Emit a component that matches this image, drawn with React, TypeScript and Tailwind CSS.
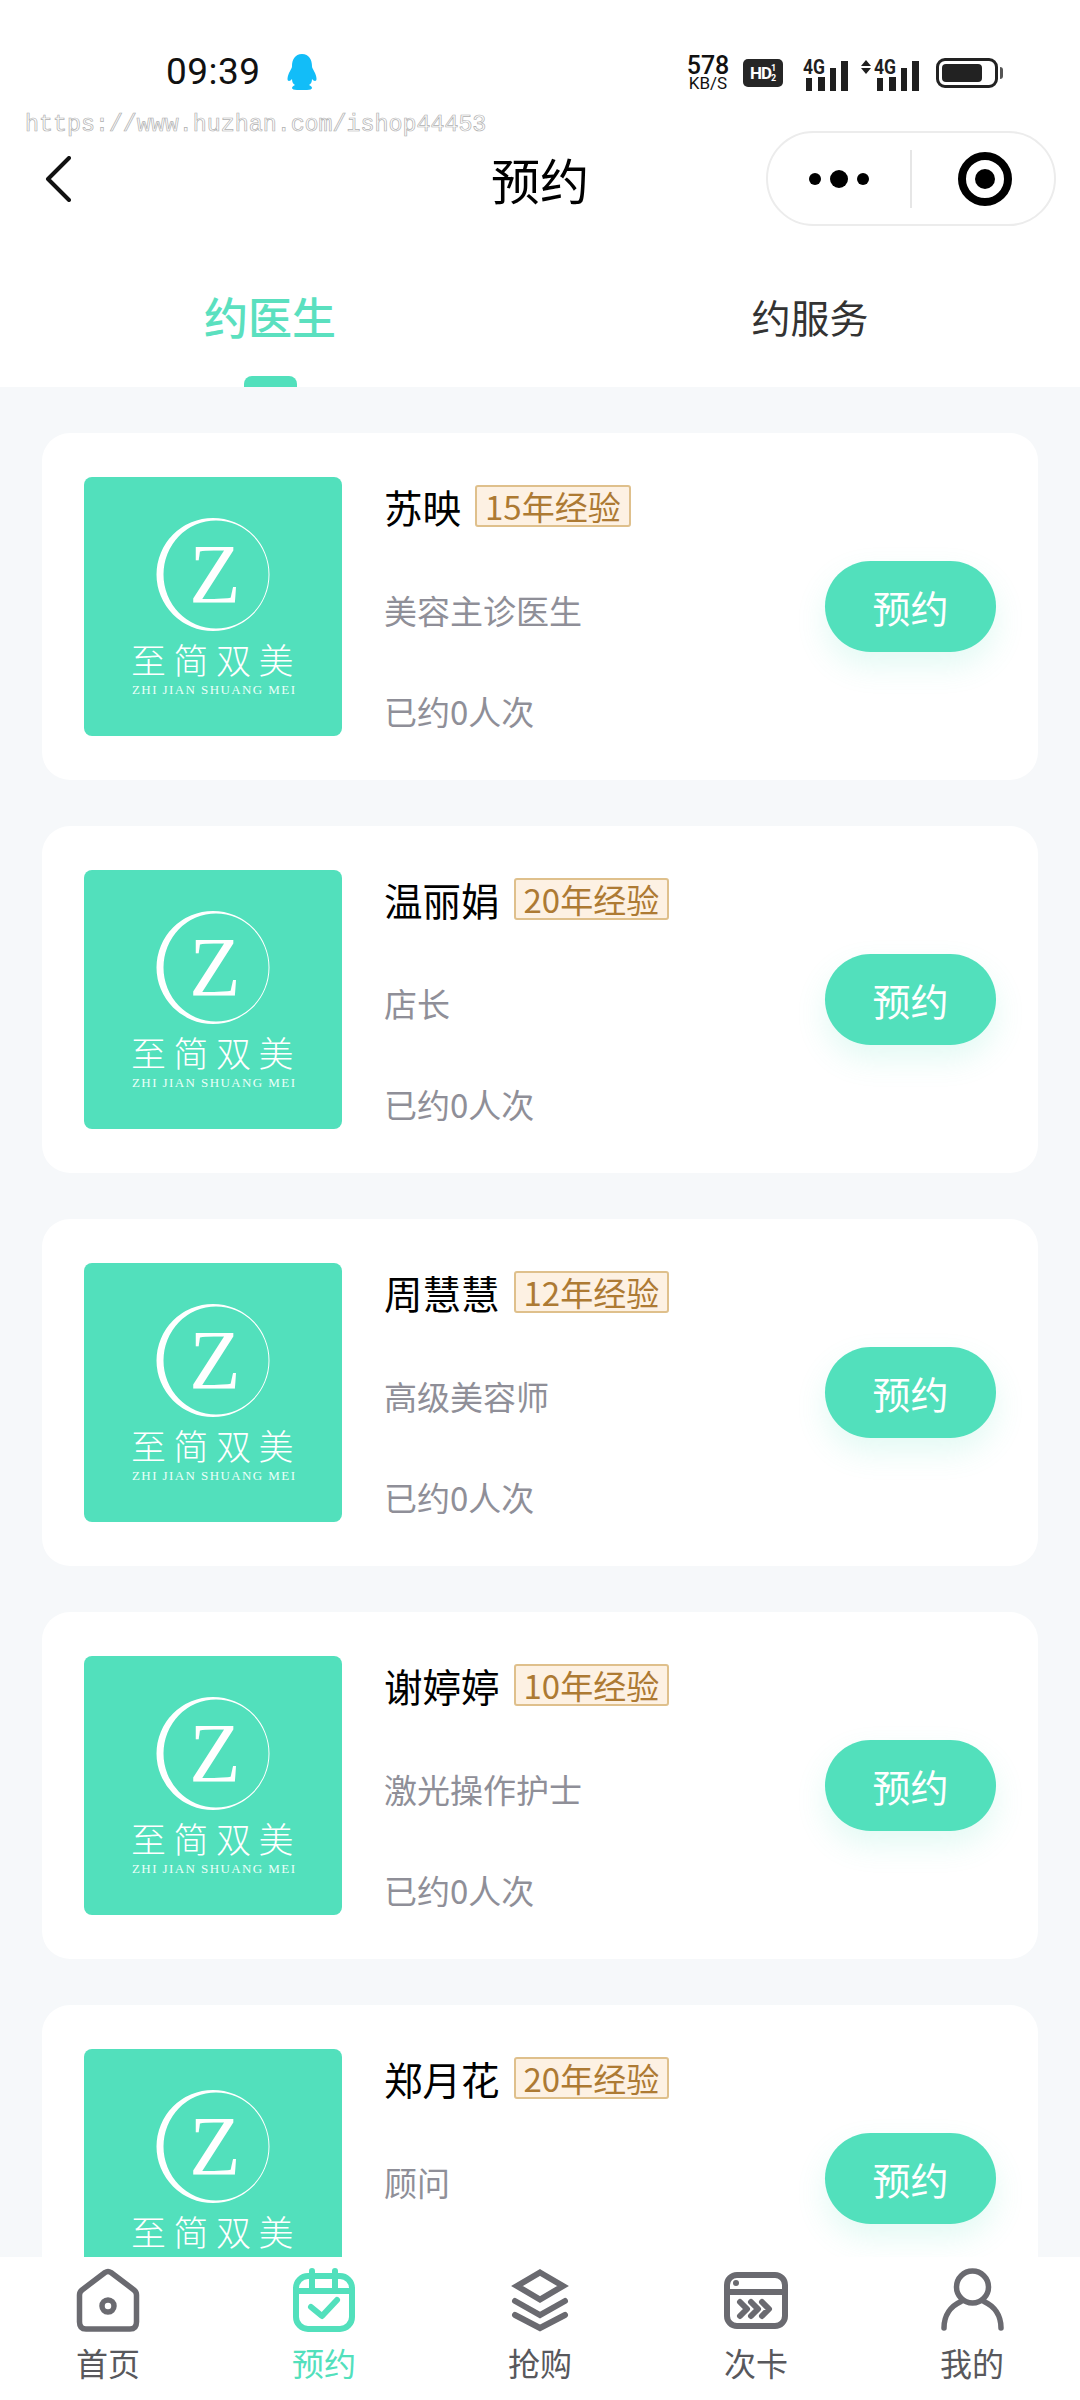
const doctors = [
  { name: "苏映", years: "15年经验", role: "美容主诊医生" },
  { name: "温丽娟", years: "20年经验", role: "店长" },
  { name: "周慧慧", years: "12年经验", role: "高级美容师" },
  { name: "谢婷婷", years: "10年经验", role: "激光操作护士" },
  { name: "郑月花", years: "20年经验", role: "顾问" },
];

function Signal({ arrows }: { arrows?: boolean }) {
  return (
    <svg width={arrows ? 58 : 45} height="38" viewBox={arrows ? "0 -5 58 38" : "0 -5 45 38"}>
      {arrows && <path d="M5 1l5 6H0zM5 15L0 9h10z" fill="#1f1f1f" />}
      <g transform={arrows ? "translate(13 0)" : undefined} fill="#1f1f1f">
        <text x="0" y="15" fontSize="20" fontWeight="700" fontFamily="Roboto, sans-serif" textLength="22" lengthAdjust="spacingAndGlyphs">
          4G
        </text>
        <rect x="3" y="19" width="6" height="13" />
        <rect x="15" y="18" width="7" height="14" />
        <rect x="27" y="9" width="6" height="23" />
        <rect x="38" y="2" width="7" height="30" />
      </g>
    </svg>
  );
}

function StatusBar() {
  return (
    <div className="flex h-[131px] items-start pt-[54px] pl-[166px] pr-[77px] font-['Roboto',sans-serif] text-[#111]">
      <span className="text-[37px] leading-[36px] tracking-[0.5px]">09:39</span>
      <svg className="ml-[25px]" width="32" height="36" viewBox="0 0 32 36" fill="#12bdf8">
        <path d="M16 0c7 0 10 6 10 12 0 2 1 3 3 7 2 5 2 8 0 8-1 0-2-1-3-2 0 3-1 5-3 6 2 1 3 2 3 3 0 1-2 2-5 2h-10c-3 0-5-1-5-2 0-1 1-2 3-3-2-1-3-3-3-6-1 1-2 2-3 2-2 0-2-3 0-8 2-4 3-5 3-7C6 6 9 0 16 0z" />
      </svg>
      <div className="ml-auto flex items-center">
        <div className="flex w-[44px] flex-col items-center leading-none">
          <span className="text-[25px] font-medium leading-[20px]">578</span>
          <span className="text-[17px] leading-[15px]">KB/S</span>
        </div>
        <div className="ml-[13px] flex h-[28px] w-[40px] items-center justify-center rounded-[5px] bg-[#262626] text-[17px] font-bold leading-none tracking-[-1px] text-white">
          HD
          <span className="flex flex-col text-[9px] leading-[10px] tracking-normal">
            <span>1</span>
            <span>2</span>
          </span>
        </div>
        <div className="ml-[20px]">
          <Signal />
        </div>
        <div className="ml-[13px]">
          <Signal arrows />
        </div>
        <div className="ml-[17px] flex items-center">
          <div className="h-[30px] w-[62px] rounded-[9px] border-[3px] border-[#222] p-[3px]">
            <div className="h-full w-[40px] rounded-[4px] bg-[#222]" />
          </div>
          <div className="ml-[2px] h-[12px] w-[3px] rounded-r bg-[#555]" />
        </div>
      </div>
    </div>
  );
}

function TitleBar() {
  return (
    <div className="grid h-[95px] grid-cols-[1fr_auto_1fr] items-center">
      <svg className="ml-[45px]" width="26" height="46" viewBox="0 0 26 46" fill="none" stroke="#111" strokeWidth="4" strokeLinecap="round" strokeLinejoin="round">
        <path d="M24 2L3 23l21 21" />
      </svg>
      <h1 className="text-[49px] leading-[60px] text-black">预约</h1>
      <div className="ml-auto mr-[24px] flex h-[95px] w-[290px] items-center rounded-full border-2 border-[#ececec] bg-white">
        <div className="flex w-[142px] items-center justify-center gap-[9px]">
          <span className="size-[12px] rounded-full bg-black" />
          <span className="size-[18px] rounded-full bg-black" />
          <span className="size-[12px] rounded-full bg-black" />
        </div>
        <div className="h-[58px] w-[2px] bg-[#e6e6e6]" />
        <div className="flex flex-1 items-center justify-center pl-[3px]">
          <div className="flex size-[54px] items-center justify-center rounded-full border-[8px] border-black">
            <span className="size-[20px] rounded-full bg-black" />
          </div>
        </div>
      </div>
    </div>
  );
}

function Tabs() {
  return (
    <div className="grid h-[161px] grid-cols-2">
      <div className="flex flex-col items-center pt-[64px]">
        <span className="text-[44px] font-medium leading-[52px] text-[#5be0bf]">约医生</span>
        <span className="mt-auto h-[11px] w-[53px] rounded-t-[8px] bg-[#52e0bc]" />
      </div>
      <div className="flex flex-col items-center pt-[64px]">
        <span className="text-[39px] leading-[52px] text-[#333]">约服务</span>
      </div>
    </div>
  );
}

function Logo() {
  return (
    <svg className="shrink-0 rounded-[8px] bg-[#52e0bc]" width="258" height="259" viewBox="0 0 258 259">
      <path
        fill="#fff"
        fillRule="evenodd"
        d="M129 41a56.5 56.5 0 1 0 0 113a56.5 56.5 0 1 0 0-113zM132 43.500a52.500 54 0 0 1 0 108a52.500 54 0 0 1 0-108z"
      />
      <text x="131" y="126" textAnchor="middle" fontSize="84" fill="#fff" fontFamily="'Liberation Serif', serif">
        Z
      </text>
      <text x="47" y="197" fontSize="35" letterSpacing="7.500" fill="#fff" fontWeight="300" fontFamily="'Noto Sans CJK SC', sans-serif">
        至简双美
      </text>
      <text x="48" y="217" fontSize="13" textLength="163" fill="#eafff9" fontFamily="'Liberation Serif', serif">
        ZHI JIAN SHUANG MEI
      </text>
    </svg>
  );
}

function DoctorCard({ name, years, role }: { name: string; years: string; role: string }) {
  return (
    <div className="flex h-[347px] shrink-0 items-center rounded-[28px] bg-white px-[42px]">
      <Logo />
      <div className="ml-[42px] flex h-[259px] flex-col pt-[6px]">
        <div className="flex h-[46px] items-center">
          <span className="text-[38.5px] leading-[46px] text-black">{name}</span>
          <span className="ml-[14px] flex h-[42px] items-center rounded-[3px] border-2 border-[#dfc08c] bg-[#fdf1e3] px-[8px] text-[33px] leading-none text-[#ad7a33]">
            {years}
          </span>
        </div>
        <p className="mt-[58px] h-[46px] text-[33px] leading-[46px] text-[#8f8f98]">{role}</p>
        <p className="mt-[55px] h-[46px] text-[33px] leading-[46px] text-[#8f8f98]">已约0人次</p>
      </div>
      <button className="ml-auto flex h-[91px] w-[171px] items-center justify-center rounded-full bg-[#52e0bc] text-[38px] text-white shadow-[0_14px_30px_rgba(82,224,188,0.16)]">
        预约
      </button>
    </div>
  );
}

function NavIcon({ icon }: { icon: string }) {
  const gray = "#6a6a70";
  const props = { width: 64, height: 64, viewBox: "0 0 64 64", fill: "none", strokeWidth: 5.5, strokeLinecap: "round" as const, strokeLinejoin: "round" as const };
  if (icon === "home")
    return (
      <svg {...props} stroke={gray}>
        <path d="M29 4.500Q32 2.500 35 4.500L58 22Q60.500 24 60.500 27V54Q60.500 61 54 61H10Q3.500 61 3.500 54V27Q3.500 24 6 22Z" />
        <circle cx="32" cy="38" r="6" />
      </svg>
    );
  if (icon === "calendar")
    return (
      <svg {...props} stroke="#52e0bc" strokeWidth="6">
        <rect x="4" y="8" width="56" height="53" rx="12" />
        <path d="M4 23h56" />
        <path d="M20 3v19M43 3v19" />
        <path d="M19 39l11 9 15-16" />
      </svg>
    );
  if (icon === "layers")
    return (
      <svg {...props} stroke={gray} strokeWidth="6" strokeLinecap="round" strokeLinejoin="miter">
        <path d="M32 4.500L55 18 32 31.500 9 18z" />
        <path d="M7 33l25 14 25-14" />
        <path d="M7 47l25 13 25-13" />
      </svg>
    );
  if (icon === "card")
    return (
      <svg {...props} stroke={gray} strokeWidth="6">
        <rect x="3" y="7" width="58" height="51" rx="10" />
        <path d="M3 24h58" />
        <circle cx="12" cy="15" r="3" fill={gray} stroke="none" />
        <path d="M16 34l7 7-7 7M27 34l7 7-7 7M38 34l7 7-7 7" />
      </svg>
    );
  return (
    <svg {...props} stroke={gray}>
      <circle cx="32.500" cy="19" r="16" />
      <path d="M4 60C4 47 11 38 21 33.500M44 33.500C54 38 61 47 61 60" />
    </svg>
  );
}

const navItems = [
  { icon: "home", label: "首页" },
  { icon: "calendar", label: "预约", active: true },
  { icon: "layers", label: "抢购" },
  { icon: "card", label: "次卡" },
  { icon: "user", label: "我的" },
];

export default function App() {
  return (
    <div className="relative flex h-[2400px] w-[1080px] flex-col overflow-hidden bg-[#f6f8fa] font-['Noto_Sans_CJK_SC',sans-serif]">
      <header className="shrink-0 bg-white">
        <StatusBar />
        <TitleBar />
        <Tabs />
      </header>

      <span className="absolute left-[25px] top-[111px] font-['Liberation_Mono',monospace] text-[23.3px] leading-[28px] text-white [-webkit-text-stroke:0.7px_#b0b0b0]">
        https://www.huzhan.com/ishop44453
      </span>

      <main className="flex min-h-0 flex-1 flex-col gap-[46px] overflow-hidden px-[42px] pt-[46px]">
        {doctors.map((d) => (
          <DoctorCard key={d.name} {...d} />
        ))}
      </main>

      <nav className="grid h-[143px] shrink-0 grid-cols-5 bg-white pt-[11px]">
        {navItems.map((item) => (
          <div key={item.label} className="flex flex-col items-center">
            <NavIcon icon={item.icon} />
            <span className={`mt-[10px] text-[32px] leading-[40px] ${item.active ? "text-[#52e0bc]" : "text-[#58585c]"}`}>
              {item.label}
            </span>
          </div>
        ))}
      </nav>
    </div>
  );
}
